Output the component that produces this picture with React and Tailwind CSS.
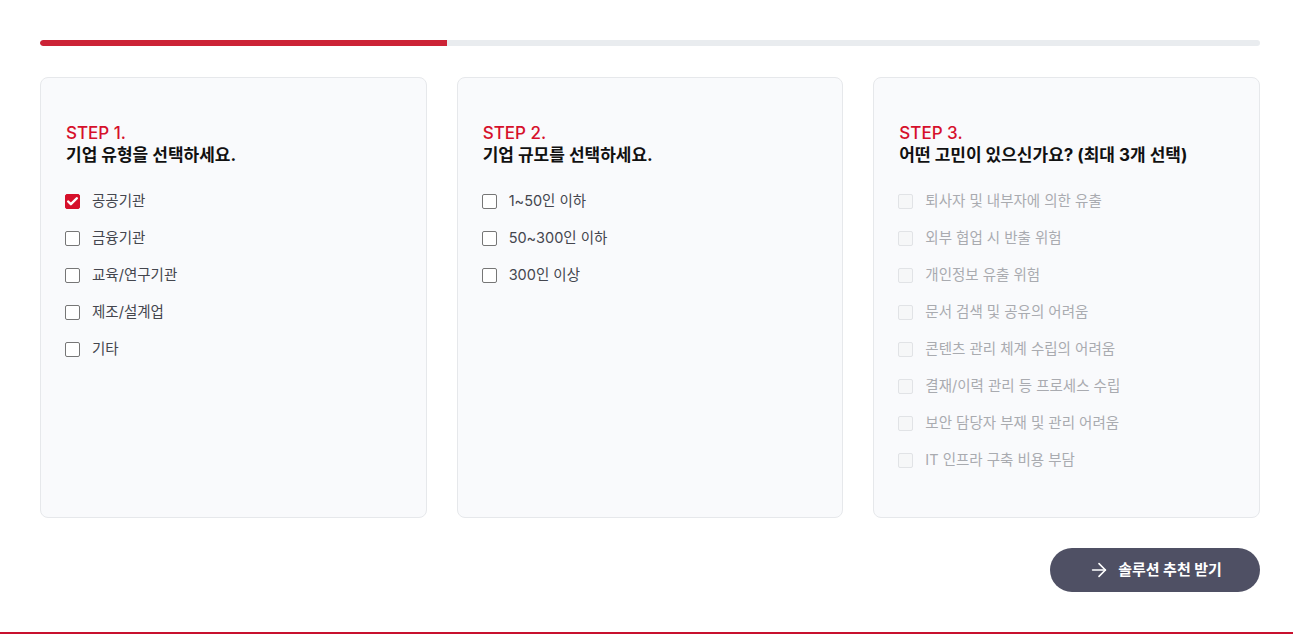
import React, { useState } from 'react';
import { ArrowRight, Check } from 'lucide-react';

const steps = [
  {
    label: 'STEP 1.',
    title: '기업 유형을 선택하세요.',
    options: ['공공기관', '금융기관', '교육/연구기관', '제조/설계업', '기타'],
  },
  {
    label: 'STEP 2.',
    title: '기업 규모를 선택하세요.',
    options: ['1~50인 이하', '50~300인 이하', '300인 이상'],
  },
  {
    label: 'STEP 3.',
    title: '어떤 고민이 있으신가요? (최대 3개 선택)',
    options: [
      '퇴사자 및 내부자에 의한 유출',
      '외부 협업 시 반출 위험',
      '개인정보 유출 위험',
      '문서 검색 및 공유의 어려움',
      '콘텐츠 관리 체계 수립의 어려움',
      '결재/이력 관리 등 프로세스 수립',
      '보안 담당자 부재 및 관리 어려움',
      'IT 인프라 구축 비용 부담',
    ],
    disabled: true,
  },
];

const CheckRow = ({ text, checked, disabled, onToggle }) => (
  <button
    type="button"
    onClick={disabled ? undefined : onToggle}
    className={`flex h-[22px] items-center gap-3 text-left text-[14.5px] ${disabled ? 'cursor-default text-[#a9abb0]' : 'text-[#44464e]'}`}
  >
    <span
      className={`flex h-[15px] w-[15px] shrink-0 items-center justify-center rounded-[2px] border ${
        checked
          ? 'border-[#d6102b] bg-[#d6102b]'
          : disabled
          ? 'border-[#e1e3e6] bg-[#f6f7f8]'
          : 'border-[#767676] bg-white'
      }`}
    >
      {checked && <Check size={13} strokeWidth={4.5} className="text-white" />}
    </span>
    <span>{text}</span>
  </button>
);

export default function App() {
  const [picked, setPicked] = useState({ 0: [0], 1: [], 2: [] });

  const toggle = (s, i) => {
    setPicked(prev => {
      const cur = prev[s];
      const next = cur.includes(i) ? cur.filter(x => x !== i) : [...cur, i];
      return { ...prev, [s]: next };
    });
  };

  return (
    <div className="h-[634px] overflow-hidden bg-white font-['Inter','Noto_Sans_CJK_KR',sans-serif]">
      <div className="w-[1300px] pl-10 pt-10">
        <div className="w-[1220px]">
          {/* progress */}
          <div className="h-1.5 w-full overflow-hidden rounded-full bg-[#e9ecef]">
            <div className="h-full w-[407px] rounded-l-full bg-[#cc2336]" />
          </div>

          <div className="mt-[31px] grid grid-cols-3 gap-[30px]">
            {steps.map((step, s) => (
              <div
                key={step.label}
                className="h-[441px] rounded-lg border border-[#e6e8eb] bg-[#f9fafc] px-6 pt-[44px]"
              >
                <p className="pl-px text-[17px] font-medium leading-[22px] text-[#d6102b]">{step.label}</p>
                <h2 className="pl-px text-[17px] font-bold leading-[22px] text-[#111]">{step.title}</h2>
                <div className="mt-6 flex flex-col gap-[15px]">
                  {step.options.map((opt, i) => (
                    <CheckRow
                      key={opt}
                      text={opt}
                      disabled={step.disabled}
                      checked={picked[s].includes(i)}
                      onToggle={() => toggle(s, i)}
                    />
                  ))}
                </div>
              </div>
            ))}
          </div>

          <div className="mt-[30px] flex justify-end">
            <button
              type="button"
              className="flex h-11 w-[210px] items-center justify-center gap-2 rounded-full bg-[#4f5064] text-[15px] font-bold text-white"
            >
              <ArrowRight size={22} strokeWidth={1.75} />
              솔루션 추천 받기
            </button>
          </div>
        </div>
      </div>
      <div className="mt-10 h-[2px] w-full bg-[#c8102e]" />
    </div>
  );
}
